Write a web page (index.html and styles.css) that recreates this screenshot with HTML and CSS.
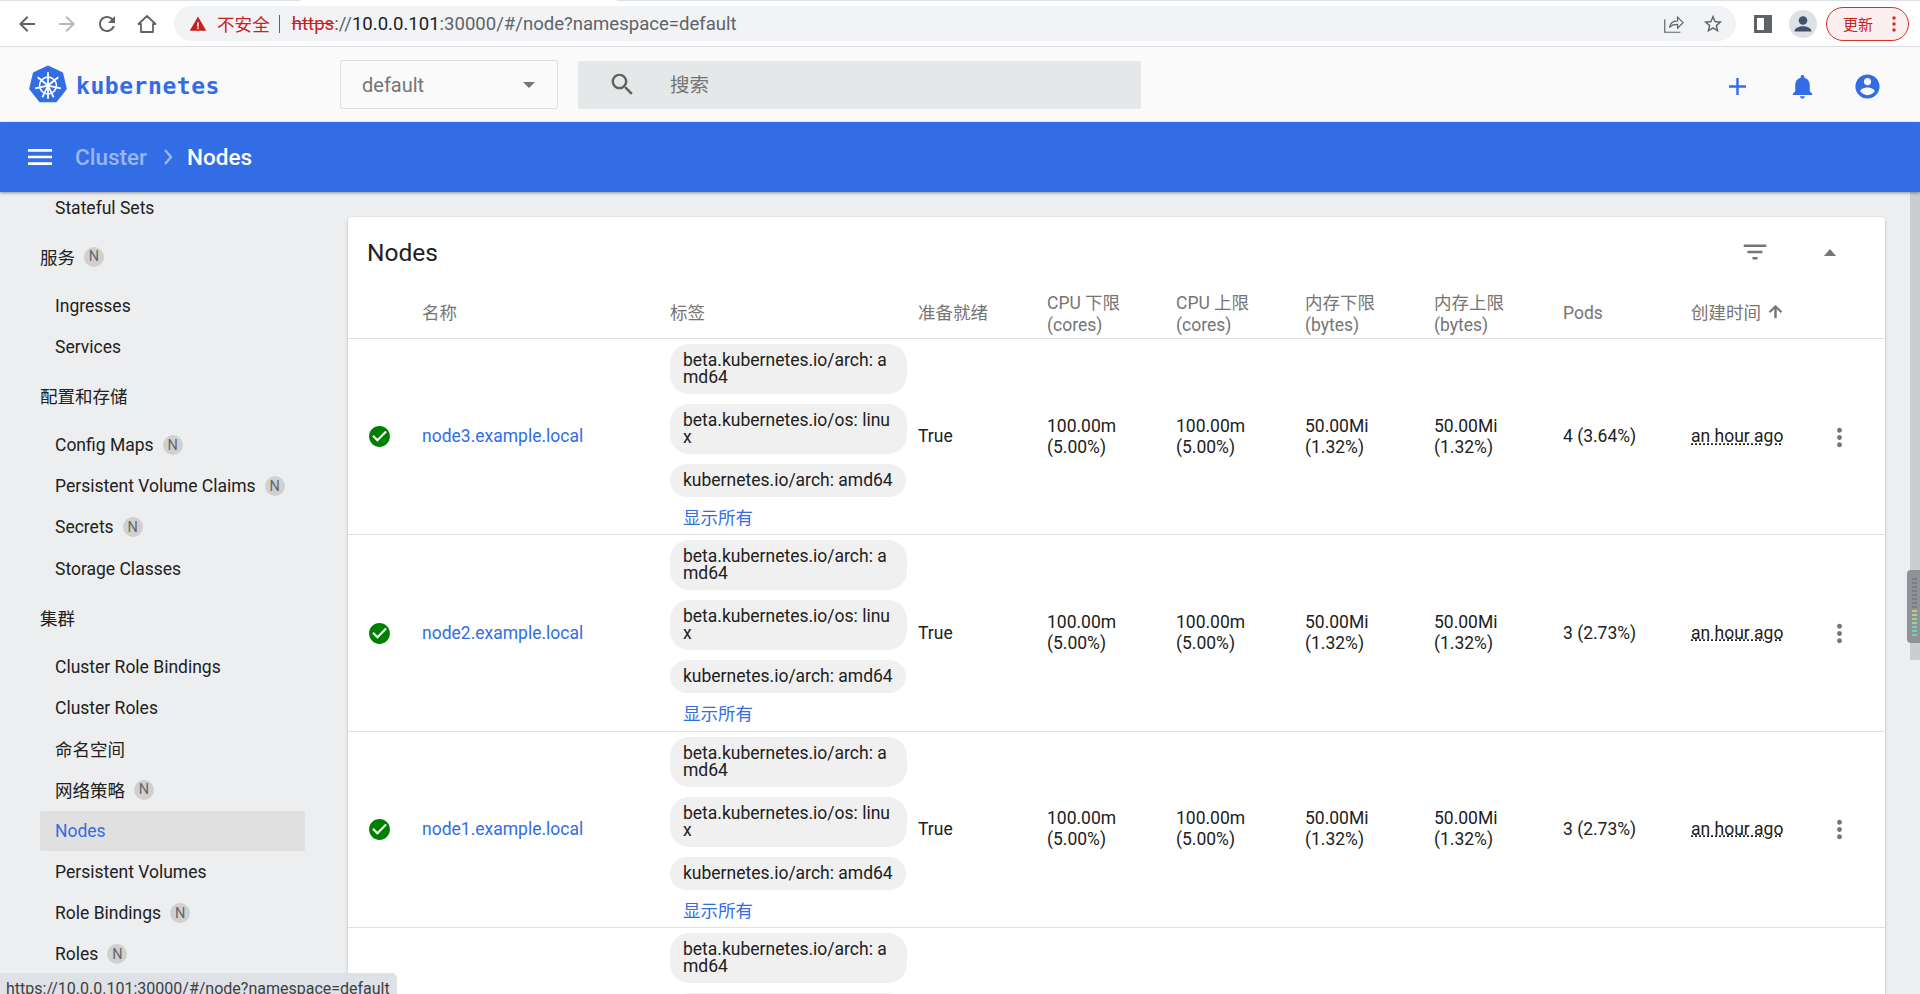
FILE: index.html
```html
<!DOCTYPE html>
<html lang="zh-CN">
<head>
<meta charset="utf-8">
<title>Nodes - Kubernetes Dashboard</title>
<link rel="stylesheet" href="styles.css">
</head>
<body>
<svg class="defs" width="0" height="0" aria-hidden="true">
  <symbol id="i-check" viewBox="0 0 24 24"><circle cx="12" cy="12" r="10" fill="#fff"/><path fill="#008000" d="M12 2C6.48 2 2 6.48 2 12s4.48 10 10 10 10-4.48 10-10S17.52 2 12 2zm-2 15l-5-5 1.41-1.41L10 14.17l7.59-7.59L19 8l-9 9z"/></symbol>
  <symbol id="i-more" viewBox="0 0 24 24"><path fill="#757575" d="M12 8c1.1 0 2-.9 2-2s-.9-2-2-2-2 .9-2 2 .9 2 2 2zm0 2c-1.1 0-2 .9-2 2s.9 2 2 2 2-.9 2-2-.9-2-2-2zm0 6c-1.1 0-2 .9-2 2s.9 2 2 2 2-.9 2-2-.9-2-2-2z"/></symbol>
</svg>

<div class="tabstrip"><span class="tab-edge"></span><span class="tab-active"></span><span class="tab-edge grow"></span></div>
<div class="chrome">
  <svg class="nav-ic" viewBox="0 0 24 24"><path fill="#5f6368" d="M20 11H7.83l5.59-5.59L12 4l-8 8 8 8 1.41-1.41L7.83 13H20v-2z"/></svg>
  <svg class="nav-ic" viewBox="0 0 24 24"><path fill="#b4b7bb" d="M12 4l-1.41 1.41L16.17 11H4v2h12.17l-5.58 5.59L12 20l8-8z"/></svg>
  <svg class="nav-ic" viewBox="0 0 24 24"><path fill="#5f6368" d="M17.65 6.35C16.2 4.9 14.21 4 12 4c-4.42 0-7.99 3.58-7.99 8s3.57 8 7.99 8c3.73 0 6.84-2.55 7.73-6h-2.08c-.82 2.33-3.04 4-5.65 4-3.31 0-6-2.69-6-6s2.69-6 6-6c1.66 0 3.14.69 4.22 1.78L13 11h7V4l-2.35 2.35z"/></svg>
  <svg class="nav-ic" viewBox="0 0 24 24"><path fill="none" stroke="#5f6368" stroke-width="1.8" stroke-linejoin="round" d="M3.5 12 12 4l8.500 8H18v8H6v-8z"/></svg>
  <div class="omnibox">
    <svg class="warn" viewBox="0 0 24 24"><path fill="#c5221f" d="M1 21h22L12 2 1 21z"/><path fill="#fff" d="M11 9.500h2v6h-2zM11 16.500h2v2h-2z"/></svg>
    <span class="insecure">不安全</span><span class="sep"></span>
    <span class="url"><span class="scheme">https</span><span class="url-dim">://</span><span class="url-host">10.0.0.101</span><span class="url-dim">:30000/#/node?namespace=default</span></span>
    <svg class="omni-ic share" viewBox="0 0 24 24"><path fill="none" stroke="#5f6368" stroke-width="1.300" d="M3 7v14h17M8 16c1-5 5-7.500 9-7.500V4.500l6 6-6 6v-4c-4 0-7 1-9 3.500z"/></svg>
    <svg class="omni-ic" viewBox="0 0 24 24"><path fill="#5f6368" d="M22 9.240l-7.190-.62L12 2 9.190 8.630 2 9.240l5.460 4.730L5.820 21 12 17.270 18.180 21l-1.630-7.030L22 9.240zM12 15.400l-3.760 2.270 1-4.280-3.320-2.880 4.380-.38L12 6.100l1.710 4.040 4.380.38-3.320 2.880 1 4.280L12 15.400z"/></svg>
  </div>
  <svg class="panel-ic" viewBox="0 0 18 18"><path fill="#5f6368" d="M0 0h18v18H0z"/><path fill="#fff" d="M3 3h7v12H3z"/></svg>
  <svg class="avatar" viewBox="0 0 28 28"><circle cx="14" cy="14" r="14" fill="#dee1e6"/><circle cx="14" cy="10.500" r="4.300" fill="#45526b"/><path fill="#45526b" d="M5.500 21.500c0-3.800 5-5.300 8.500-5.300s8.500 1.500 8.500 5.300z"/></svg>
  <div class="update"><span>更新</span><svg class="update-dots" viewBox="0 0 4 16"><circle cx="2" cy="2" r="1.800"/><circle cx="2" cy="8" r="1.800"/><circle cx="2" cy="14" r="1.800"/></svg></div>
</div>

<header class="app-header">
  <div class="brand">
    <svg class="logo" viewBox="0 0 36 38">
      <path fill="#326de6" stroke="#326de6" stroke-width="3" stroke-linejoin="round" d="M18 2 31 8.300 34.300 22.500 25.200 34H10.800L1.700 22.500 5 8.300z"/>
      <g fill="none" stroke="#fff" stroke-width="1.500">
        <circle cx="18" cy="19.500" r="8"/>
        <path stroke-width="1.700" d="M18 7v25M18 19.500 8.200 11.700M18 19.500l9.800-7.800M18 19.500 5.800 22.300M18 19.500l12.200 2.800M18 19.500 12.600 30.800M18 19.500l5.400 11.300"/>
      </g>
      <circle cx="18" cy="19.500" r="2" fill="#fff"/>
    </svg>
    <span class="wordmark">kubernetes</span>
  </div>
  <div class="ns-select"><span class="ns-value">default</span><span class="caret-down"></span></div>
  <div class="search">
    <svg class="search-ic" viewBox="0 0 24 24"><path d="M15.500 14h-.79l-.28-.27C15.410 12.590 16 11.110 16 9.500 16 5.910 13.090 3 9.500 3S3 5.910 3 9.500 5.910 16 9.500 16c1.610 0 3.090-.59 4.230-1.570l.27.28v.79l5 4.990L20.490 19l-4.990-5zm-6 0C7.010 14 5 11.990 5 9.500S7.010 5 9.500 5 14 7.010 14 9.500 11.990 14 9.500 14z"/></svg>
    <span class="search-text">搜索</span>
  </div>
  <div class="actions">
    <span class="action"><svg class="act-ic" viewBox="0 0 24 24"><path d="M19 13h-6v6h-2v-6H5v-2h6V5h2v6h6v2z"/></svg></span>
    <span class="action"><svg class="act-ic" viewBox="0 0 24 24"><path d="M12 22c1.100 0 2-.9 2-2h-4c0 1.100.89 2 2 2zm6-6v-5c0-3.070-1.640-5.640-4.500-6.320V4c0-.83-.67-1.500-1.500-1.500s-1.500.67-1.500 1.500v.68C7.630 5.360 6 7.920 6 11v5l-2 2v1h16v-1l-2-2z"/></svg></span>
    <span class="action"><svg class="act-ic" viewBox="0 0 24 24"><path d="M12 2C6.480 2 2 6.480 2 12s4.480 10 10 10 10-4.480 10-10S17.520 2 12 2zm0 3c1.660 0 3 1.340 3 3s-1.340 3-3 3-3-1.340-3-3 1.340-3 3-3zm0 14.200c-2.500 0-4.710-1.280-6-3.220.03-1.990 4-3.080 6-3.080 1.990 0 5.970 1.090 6 3.080-1.290 1.940-3.500 3.220-6 3.220z"/></svg></span>
  </div>
</header>

<div class="toolbar">
  <svg class="menu-ic" viewBox="0 0 24 24"><path d="M3 18h18v-2H3v2zm0-5h18v-2H3v2zm0-7v2h18V6H3z"/></svg>
  <span class="crumb">Cluster</span>
  <svg class="crumb-sep" viewBox="0 0 10 18"><path fill="none" stroke="currentColor" stroke-width="2.400" d="M2 2l6 7-6 7"/></svg>
  <span class="crumb current">Nodes</span>
</div>

<div class="main">
  <nav class="sidebar">
    <div class="nav-inner">
      <div class="nav-item">Stateful Sets</div>
      <div class="nav-group">服务<span class="badge">N</span></div>
      <div class="nav-item">Ingresses</div>
      <div class="nav-item">Services</div>
      <div class="nav-group">配置和存储</div>
      <div class="nav-item">Config Maps<span class="badge">N</span></div>
      <div class="nav-item">Persistent Volume Claims<span class="badge">N</span></div>
      <div class="nav-item">Secrets<span class="badge">N</span></div>
      <div class="nav-item">Storage Classes</div>
      <div class="nav-group">集群</div>
      <div class="nav-item">Cluster Role Bindings</div>
      <div class="nav-item">Cluster Roles</div>
      <div class="nav-item">命名空间</div>
      <div class="nav-item">网络策略<span class="badge">N</span></div>
      <div class="nav-item active">Nodes</div>
      <div class="nav-item">Persistent Volumes</div>
      <div class="nav-item">Role Bindings<span class="badge">N</span></div>
      <div class="nav-item">Roles<span class="badge">N</span></div>
    </div>
  </nav>

  <section class="content">
    <div class="card">
      <div class="card-head">
        <h1 class="card-title">Nodes</h1>
        <svg class="filter-ic" viewBox="0 0 24 24"><path d="M10 18h4v-2h-4v2zM3 6v2h18V6H3zm3 7h12v-2H6v2z"/></svg>
        <span class="caret-up"></span>
      </div>
      <div class="row head">
        <div class="c-status"></div>
        <div class="c-name h1">名称</div>
        <div class="c-labels h1">标签</div>
        <div class="c-n h1">准备就绪</div>
        <div class="c-n">CPU 下限<br>(cores)</div>
        <div class="c-n">CPU 上限<br>(cores)</div>
        <div class="c-n">内存下限<br>(bytes)</div>
        <div class="c-n">内存上限<br>(bytes)</div>
        <div class="c-pods h1">Pods</div>
        <div class="c-time h1">创建时间<svg class="sort-ic" viewBox="0 0 24 24"><path d="M4 12l1.410 1.410L11 7.830V20h2V7.830l5.580 5.590L20 12l-8-8-8 8z"/></svg></div>
        <div class="c-act"></div>
      </div>

      <div class="row body">
        <div class="c-status"><svg class="ok-ic"><use href="#i-check"/></svg></div>
        <div class="c-name"><a class="link">node3.example.local</a></div>
        <div class="c-labels">
          <span class="chip">beta.kubernetes.io/arch: amd64</span>
          <span class="chip">beta.kubernetes.io/os: linux</span>
          <span class="chip">kubernetes.io/arch: amd64</span>
          <a class="show-all">显示所有</a>
        </div>
        <div class="c-n">True</div>
        <div class="c-n">100.00m<br>(5.00%)</div>
        <div class="c-n">100.00m<br>(5.00%)</div>
        <div class="c-n">50.00Mi<br>(1.32%)</div>
        <div class="c-n">50.00Mi<br>(1.32%)</div>
        <div class="c-pods">4 (3.64%)</div>
        <div class="c-time"><span class="age">an hour ago</span></div>
        <div class="c-act"><svg class="more-ic"><use href="#i-more"/></svg></div>
      </div>

      <div class="row body">
        <div class="c-status"><svg class="ok-ic"><use href="#i-check"/></svg></div>
        <div class="c-name"><a class="link">node2.example.local</a></div>
        <div class="c-labels">
          <span class="chip">beta.kubernetes.io/arch: amd64</span>
          <span class="chip">beta.kubernetes.io/os: linux</span>
          <span class="chip">kubernetes.io/arch: amd64</span>
          <a class="show-all">显示所有</a>
        </div>
        <div class="c-n">True</div>
        <div class="c-n">100.00m<br>(5.00%)</div>
        <div class="c-n">100.00m<br>(5.00%)</div>
        <div class="c-n">50.00Mi<br>(1.32%)</div>
        <div class="c-n">50.00Mi<br>(1.32%)</div>
        <div class="c-pods">3 (2.73%)</div>
        <div class="c-time"><span class="age">an hour ago</span></div>
        <div class="c-act"><svg class="more-ic"><use href="#i-more"/></svg></div>
      </div>

      <div class="row body">
        <div class="c-status"><svg class="ok-ic"><use href="#i-check"/></svg></div>
        <div class="c-name"><a class="link">node1.example.local</a></div>
        <div class="c-labels">
          <span class="chip">beta.kubernetes.io/arch: amd64</span>
          <span class="chip">beta.kubernetes.io/os: linux</span>
          <span class="chip">kubernetes.io/arch: amd64</span>
          <a class="show-all">显示所有</a>
        </div>
        <div class="c-n">True</div>
        <div class="c-n">100.00m<br>(5.00%)</div>
        <div class="c-n">100.00m<br>(5.00%)</div>
        <div class="c-n">50.00Mi<br>(1.32%)</div>
        <div class="c-n">50.00Mi<br>(1.32%)</div>
        <div class="c-pods">3 (2.73%)</div>
        <div class="c-time"><span class="age">an hour ago</span></div>
        <div class="c-act"><svg class="more-ic"><use href="#i-more"/></svg></div>
      </div>

      <div class="row body">
        <div class="c-status"></div>
        <div class="c-name"></div>
        <div class="c-labels">
          <span class="chip">beta.kubernetes.io/arch: amd64</span>
          <span class="chip">beta.kubernetes.io/os: linux</span>
        </div>
      </div>
    </div>
  </section>

  <div class="scrollbar"><div class="scroll-thumb"><i></i><i></i><i></i><i></i><i></i><i></i><i></i><i></i><i class="y"></i><i class="y"></i><i class="g"></i><i class="g"></i><i class="t"></i><i class="t"></i><i class="t"></i></div></div>
</div>

<div class="status-tip">https://10.0.0.101:30000/#/node?namespace=default</div>
</body>
</html>
```
FILE: styles.css
```css
* { box-sizing: border-box; }
html, body { margin: 0; height: 994px; overflow: hidden; }
body {
  position: relative;
  display: flex;
  flex-direction: column;
  background: #edeef0;
  font-family: Roboto, "Noto Sans CJK SC", sans-serif;
  color: #212121;
  font-size: 17.5px;
}
.defs { position: absolute; }
a { color: inherit; text-decoration: none; }

/* browser chrome */
.tabstrip { display: flex; height: 1px; background: #fff; flex: none; }
.tab-edge { width: 300px; background: #dee1e6; }
.tab-active { width: 317px; }
.tab-edge.grow { flex: 1; }
.chrome {
  display: flex;
  align-items: center;
  height: 46px;
  flex: none;
  background: #fff;
  border-bottom: 1px solid #dadce0;
  padding-left: 15px;
}
.nav-ic { width: 24px; height: 24px; margin-right: 16px; flex: none; }
.omnibox {
  display: flex;
  align-items: center;
  width: 1562px;
  height: 35px;
  margin-left: -1px;
  padding-left: 15px;
  border-radius: 18px;
  background: #f1f3f4;
  flex: none;
}
.warn { width: 18px; height: 18px; flex: none; }
.insecure { margin-left: 10px; color: #c5221f; font-size: 17.6px; }
.sep { width: 1px; height: 18px; margin: 0 12px 0 9px; background: #5f6368; }
.url { flex: 1; white-space: nowrap; font-size: 18.56px; }
.scheme { color: #c5221f; text-decoration: line-through; }
.url-dim { color: #5f6368; }
.url-host { color: #202124; }
.omni-ic { width: 22px; height: 22px; margin-right: 12px; flex: none; }
.share { margin-right: 18px; }
.panel-ic { width: 18px; height: 18px; margin-left: 18px; flex: none; }
.avatar { width: 28px; height: 28px; margin-left: 17px; flex: none; }
.update {
  display: flex;
  align-items: center;
  width: 83px;
  height: 34px;
  margin-left: 9px;
  padding-left: 16px;
  border: 1.5px solid #d93025;
  border-radius: 17px;
  background: #fbeeee;
  color: #c5221f;
  font-size: 15px;
  flex: none;
}
.update-dots { width: 4px; height: 16px; margin-left: 19px; fill: #d93025; }

/* app header */
.app-header {
  display: flex;
  align-items: center;
  height: 75px;
  flex: none;
  background: #fafafa;
}
.brand { display: flex; align-items: center; width: 340px; padding-left: 29px; flex: none; }
.logo { width: 38px; height: 40px; flex: none; }
.wordmark {
  margin-left: 9px;
  padding-top: 2px;
  color: #326de6;
  font-family: "DejaVu Sans Mono", monospace;
  font-weight: 700;
  font-size: 23px;
  letter-spacing: .55px;
}
.ns-select {
  display: flex;
  align-items: center;
  justify-content: space-between;
  width: 218px;
  height: 49px;
  padding: 0 22px 0 21px;
  border: 1px solid #e0e0e0;
  border-radius: 2px;
  color: #757575;
  font-size: 20px;
  flex: none;
}
.caret-down { border: 6px solid transparent; border-top-color: #757575; border-bottom: 0; }
.search {
  display: flex;
  align-items: center;
  width: 563px;
  height: 48px;
  margin-left: 20px;
  border-radius: 2px;
  background: #e5e8e8;
  flex: none;
}
.search-ic { width: 29px; height: 29px; margin-left: 30px; fill: #616161; flex: none; }
.search-text { margin: -3px 0 0 33px; color: #757575; font-size: 19.5px; }
.actions { display: flex; margin-left: auto; padding: 3px 20px 0 0; }
.action { display: flex; justify-content: center; width: 65px; }
.act-ic { width: 29px; height: 29px; fill: #326de6; }

/* blue toolbar */
.toolbar {
  position: relative;
  z-index: 2;
  display: flex;
  align-items: center;
  height: 70px;
  flex: none;
  padding-left: 24px;
  background: #326de6;
  color: #fff;
  box-shadow: 0 1px 3px rgba(0,0,0,.4);
}
.menu-ic { width: 32px; height: 32px; fill: #fff; flex: none; }
.crumb { margin-left: 19px; font-size: 22.5px; font-weight: 500; color: rgba(255,255,255,.5); }
.crumb.current { margin-left: 14px; color: #fff; }
.crumb-sep { width: 10px; height: 18px; margin-left: 16px; color: rgba(255,255,255,.5); flex: none; }

/* layout */
.main { position: relative; display: flex; flex: 1; min-height: 0; overflow: hidden; }
.sidebar { width: 348px; flex: none; overflow: hidden; }
.nav-inner { margin-top: -4px; padding-left: 40px; width: 305px; }
.nav-item {
  display: flex;
  align-items: center;
  height: 40px;
  margin-bottom: 1.1px;
  padding-left: 15px;
  border-radius: 2px;
  width: 265px;
  white-space: nowrap;
}
.nav-item.active { background: #e0e0e0; color: #326de6; }
.nav-group {
  display: flex;
  align-items: center;
  height: 40px;
  margin: 8.8px 0 9.3px;
  white-space: nowrap;
}
.badge {
  display: inline-flex;
  align-items: center;
  justify-content: center;
  width: 20px;
  height: 20px;
  margin-left: 9px;
  border-radius: 50%;
  background: #d0d0d0;
  color: #666;
  font-size: 14.5px;
}

.content { flex: 1; min-width: 0; padding: 25px 25px 0 0; }
.card {
  height: 900px;
  border-radius: 4px;
  background: #fff;
  box-shadow: 0 1px 3px rgba(0,0,0,.25);
}
.card-head { display: flex; align-items: center; height: 72px; padding: 0 49px 2px 19px; }
.card-title { flex: 1; margin: 0; font-size: 24.5px; font-weight: 400; color: #212121; }
.filter-ic { width: 30px; height: 30px; fill: #757575; flex: none; }
.caret-up { margin-left: 54px; border: 6px solid transparent; border-bottom: 7px solid #757575; border-top: 0; }

.row { display: flex; align-items: center; border-bottom: 1px solid #e0e0e0; }
.row.head { height: 50px; color: #757575; line-height: 22px; align-items: flex-end; padding-bottom: 2px; }
.row.body { height: 196.4px; line-height: 21px; }
.c-status { display: flex; align-items: center; width: 74px; padding-left: 19px; flex: none; }
.c-name { width: 248px; flex: none; }
.c-labels { width: 248px; flex: none; }
.c-n { width: 129px; flex: none; }
.c-pods { width: 128px; flex: none; }
.c-time { width: 129px; flex: none; white-space: nowrap; }
.c-act { display: flex; align-items: center; flex: 1; padding: 1px 0 0 5px; }
.head .h1 { padding-bottom: 12px; }
.sort-ic { width: 19px; height: 19px; margin-left: 5px; fill: #757575; stroke: #757575; stroke-width: 1; vertical-align: -2px; }

.ok-ic { width: 25px; height: 25px; }
.more-ic { width: 29px; height: 29px; }
.link { color: #326de6; }
.body .c-labels { display: flex; flex-direction: column; align-items: flex-start; align-self: flex-start; padding-top: 5px; }
.chip {
  max-width: 237px;
  margin-bottom: 10px;
  padding: 8px 13px;
  border-radius: 19px;
  background: #f0f0f0;
  line-height: 17px;
  word-break: break-all;
}
.show-all { padding-left: 13px; color: #326de6; line-height: 20px; margin-top: 1px; }
.age { text-decoration: underline dotted; }

/* window scrollbar */
.scrollbar { position: relative; width: 10px; height: 468px; flex: none; background: #cccdcf; }
.scroll-thumb {
  position: absolute;
  top: 378px;
  right: 0;
  width: 13px;
  height: 73px;
  padding: 8px 3px 0 5px;
  border-radius: 4px 0 0 4px;
  background: #8f9297;
}
.scroll-thumb i { display: block; height: 2px; margin-bottom: 2px; background: #7b7f85; }
.scroll-thumb i.y { background: #bcc98a; }
.scroll-thumb i.g { background: #9fce9c; }
.scroll-thumb i.t { background: #78cdb4; }

/* hover link status bubble */
.status-tip {
  position: absolute;
  left: 0;
  bottom: 0;
  width: 397px;
  height: 21px;
  padding: 5px 0 0 6px;
  border-top-right-radius: 5px;
  background: #dee1e6;
  color: #3c4043;
  font-size: 16px;
  line-height: 22px;
  white-space: nowrap;
  overflow: hidden;
}
```
